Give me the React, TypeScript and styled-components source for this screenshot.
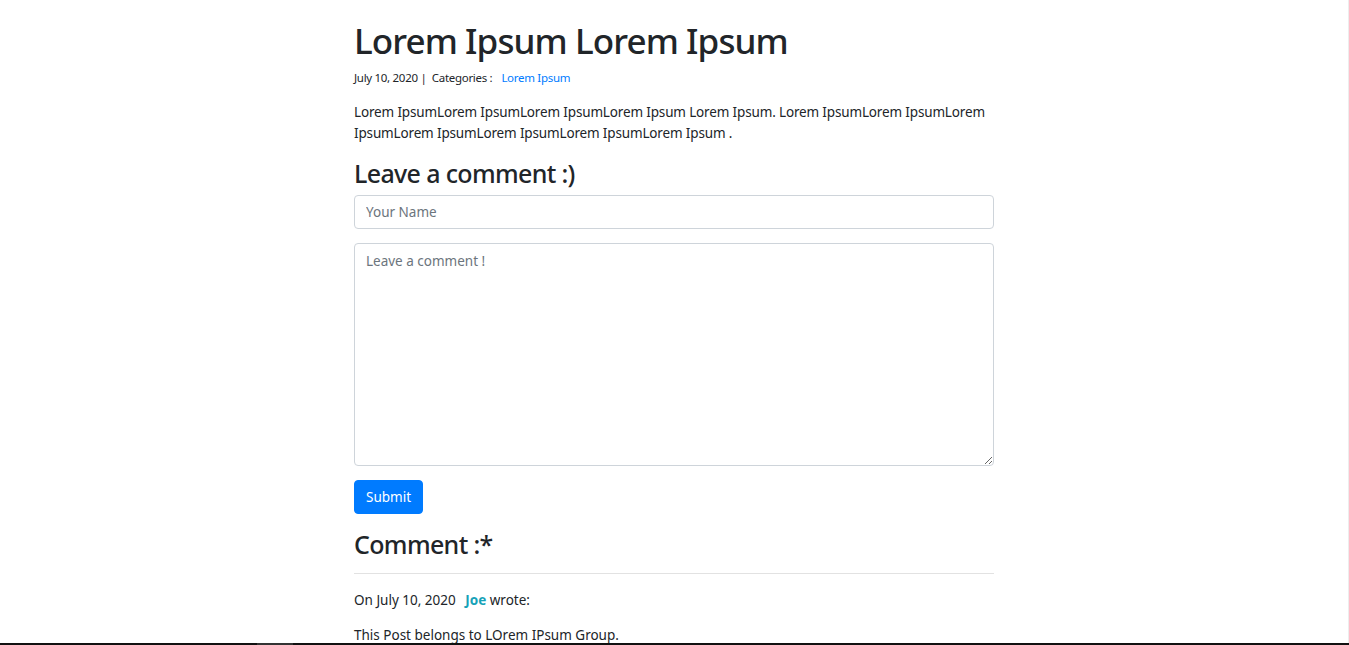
import React from "react";
import styled, { createGlobalStyle } from "styled-components";

const Global = createGlobalStyle`
  html, body { margin: 0; padding: 0; background: #fff; }
  body {
    font-family: "Noto Sans", "Open Sans", sans-serif;
    color: #212529;
    font-size: 14px;
    line-height: 1.5;
  }
  * { box-sizing: border-box; }
`;

const Column = styled.main`
  width: 640px;
  margin-left: calc(50% - 320.5px);
  padding-top: 20px;
  display: flex;
  flex-direction: column;
`;

const Title = styled.h1`
  margin: 0;
  font-size: 35px;
  font-weight: 500;
  line-height: 1.2;
  letter-spacing: -0.9px;
`;

const Meta = styled.div`
  margin-top: 7px;
  font-size: 11.5px;
  line-height: 18px;
  letter-spacing: -0.3px;
  display: flex;
`;

const MetaLink = styled.a`
  color: #007bff;
  text-decoration: none;
  margin-left: 9px;
`;

const Body = styled.p`
  margin: 15px 0 0;
  font-size: 13.5px;
  line-height: 21px;
  letter-spacing: -0.15px;
`;

const Heading = styled.h3<{ $gap: number }>`
  margin: ${(p) => p.$gap}px 0 0;
  font-size: 25px;
  font-weight: 500;
  line-height: 1.2;
  letter-spacing: -0.65px;
`;

const Form = styled.form`
  margin-top: 7px;
  display: flex;
  flex-direction: column;
  align-items: flex-start;
`;

const Field = styled.input`
  width: 100%;
  height: 34px;
  padding: 6px 11px;
  font-family: inherit;
  font-size: 13.5px;
  color: #495057;
  border: 1px solid #ced4da;
  border-radius: 4px;
  outline: none;
  &::placeholder { color: #6c757d; }
`;

const Area = styled.textarea`
  margin-top: 14px;
  width: 100%;
  height: 223px;
  padding: 7px 11px;
  font-family: inherit;
  font-size: 13.5px;
  line-height: 21px;
  color: #495057;
  border: 1px solid #ced4da;
  border-radius: 4px;
  outline: none;
  &::placeholder { color: #6c757d; }
`;

const Button = styled.button`
  margin-top: 14px;
  height: 34px;
  padding: 0 11px;
  font-family: inherit;
  font-size: 13.5px;
  color: #fff;
  background: #007bff;
  border: 1px solid #007bff;
  border-radius: 4px;
`;

const Rule = styled.hr`
  margin: 14px 0 0;
  border: 0;
  border-top: 1px solid #e2e2e2;
`;

const Line = styled.p<{ $gap: number }>`
  margin: ${(p) => p.$gap}px 0 0;
  font-size: 13.5px;
  line-height: 21px;
`;

const Author = styled.strong`
  color: #17a2b8;
  font-weight: 700;
  margin-left: 6px;
`;

const Taskbar = styled.div`
  position: fixed;
  left: 0;
  right: 0;
  bottom: 0;
  height: 2px;
  background: #111;
  display: flex;
  padding-left: 257px;
`;

const TaskSlot = styled.span`
  width: 36px;
  height: 100%;
  background: #333;
`;

const EdgeLine = styled.div`
  position: fixed;
  top: 0;
  right: 0;
  bottom: 0;
  width: 1px;
  background: #ededed;
`;

export default function App() {
  return (
    <>
      <Global />
      <Column>
        <Title>Lorem Ipsum Lorem Ipsum</Title>
        <Meta>
          <span>July 10, 2020 |&nbsp; Categories :</span>
          <MetaLink href="#">Lorem Ipsum</MetaLink>
        </Meta>
        <Body>
          Lorem IpsumLorem IpsumLorem IpsumLorem Ipsum Lorem Ipsum. Lorem IpsumLorem IpsumLorem
          IpsumLorem IpsumLorem IpsumLorem IpsumLorem Ipsum .
        </Body>
        <Heading $gap={14}>Leave a comment :)</Heading>
        <Form onSubmit={(e) => e.preventDefault()}>
          <Field placeholder="Your Name" />
          <Area placeholder="Leave a comment !" />
          <Button type="submit">Submit</Button>
        </Form>
        <Heading $gap={15}>Comment :*</Heading>
        <Rule />
        <Line $gap={16}>
          On July 10, 2020 <Author>Joe</Author> wrote:
        </Line>
        <Line $gap={14}>This Post belongs to LOrem IPsum Group.</Line>
      </Column>
      <EdgeLine />
      <Taskbar>
        <TaskSlot />
      </Taskbar>
    </>
  );
}
